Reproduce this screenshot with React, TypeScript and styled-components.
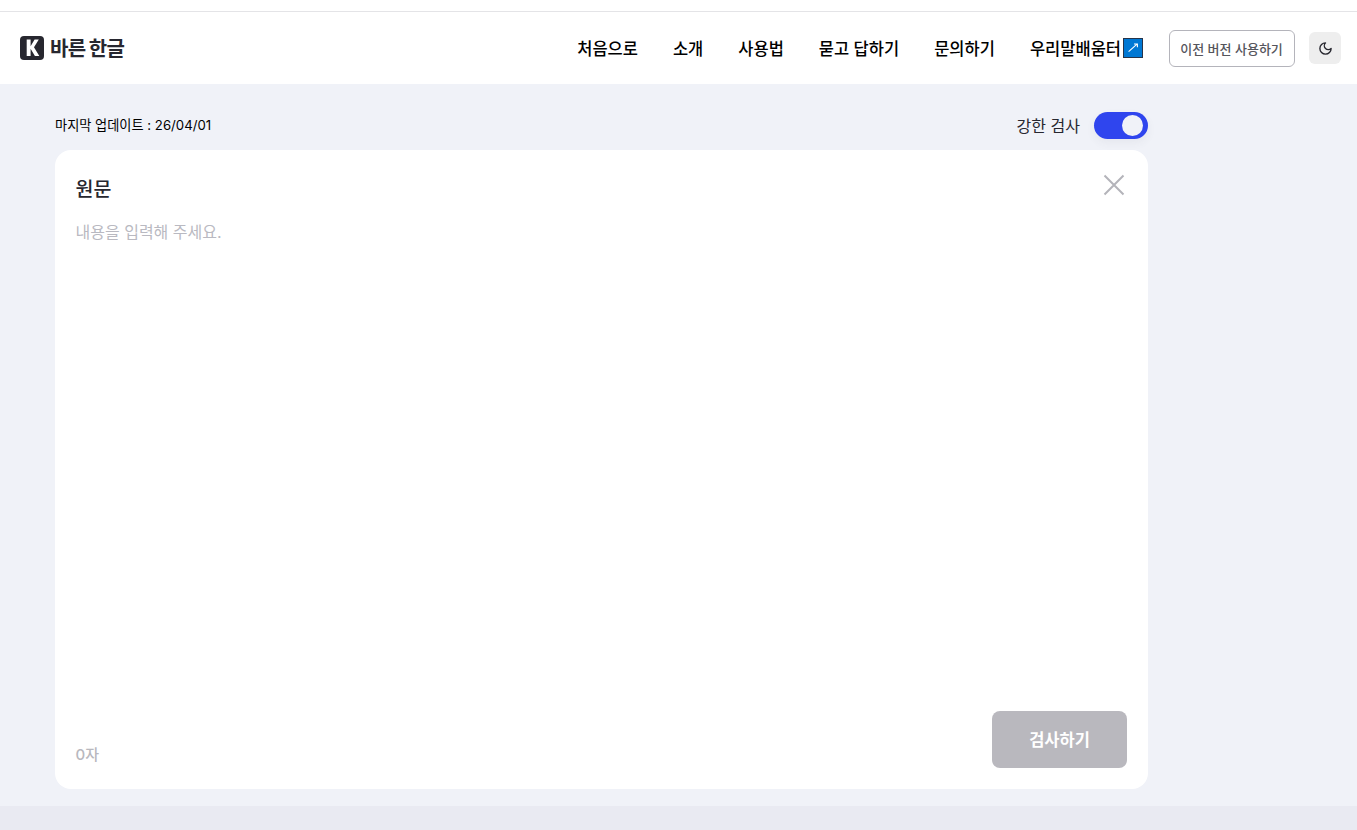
import React from 'react';
import styled, { createGlobalStyle } from 'styled-components';

const GlobalStyle = createGlobalStyle`
  html, body {
    margin: 0;
    padding: 0;
    background: #e9eaf2;
    font-family: "Inter", "Noto Sans CJK KR", sans-serif;
    overflow: hidden;
  }
`;

const Page = styled.div`
  display: flex;
  flex-direction: column;
  height: 830px;
`;

const TopStrip = styled.div`
  height: 11px;
  background: #fff;
  border-bottom: 1px solid #e4e4e7;
`;

const Header = styled.header`
  display: flex;
  align-items: center;
  justify-content: space-between;
  height: 72px;
  padding: 0 16px 0 20px;
  background: #fff;
`;

const Logo = styled.a`
  display: flex;
  align-items: center;
  gap: 6px;
  color: #27272f;
  font-size: 20px;
  font-weight: 700;
  letter-spacing: -0.6px;
  word-spacing: -1px;
  padding-bottom: 1px;
`;

const Right = styled.div`
  display: flex;
  align-items: center;
`;

const Menu = styled.nav`
  display: flex;
  align-items: center;
  gap: 35px;
  margin-right: 26px;
`;

const MenuLink = styled.a`
  display: flex;
  align-items: center;
  color: #000;
  font-size: 16.5px;
  font-weight: 500;
  white-space: nowrap;
  padding-bottom: 1px;
`;

const OldVersion = styled.button`
  width: 126px;
  height: 37px;
  padding: 0 1px 0 0;
  margin-right: 14px;
  background: #fff;
  border: 1px solid #b4b4bb;
  border-radius: 6px;
  color: #55555c;
  font-family: inherit;
  font-size: 13px;
  font-weight: 500;
`;

const ThemeButton = styled.button`
  display: flex;
  align-items: center;
  justify-content: center;
  width: 32px;
  height: 32px;
  padding: 0;
  background: #eeeeee;
  border: none;
  border-radius: 6px;
  color: #27272f;
`;

const Main = styled.main`
  flex: 1;
  padding: 28px 0 0 55px;
  background: #f0f2f8;
`;

const Content = styled.div`
  display: flex;
  flex-direction: column;
  width: 1093px;
`;

const TopRow = styled.div`
  display: flex;
  align-items: center;
  justify-content: space-between;
  height: 27px;
  margin-bottom: 11px;
`;

const Updated = styled.span`
  color: #000;
  font-size: 13.2px;
  padding-bottom: 2px;
`;

const StrictCheck = styled.label`
  display: flex;
  align-items: center;
  gap: 14px;
  color: #27272f;
  font-size: 16px;
`;

const StrictLabel = styled.span`
  padding-bottom: 2px;
`;

const Toggle = styled.span<{ $on: boolean }>`
  display: flex;
  align-items: center;
  justify-content: ${p => (p.$on ? 'flex-end' : 'flex-start')};
  width: 54px;
  height: 27px;
  padding: 0 5px;
  box-sizing: border-box;
  background: #2f45ee;
  border-radius: 14px;
  box-shadow: 0 4px 10px rgba(60, 60, 90, 0.06);
`;

const Knob = styled.span`
  width: 21px;
  height: 21px;
  background: #f0f2f8;
  border-radius: 50%;
`;

const Card = styled.section`
  display: flex;
  flex-direction: column;
  justify-content: space-between;
  height: 639px;
  padding: 25px 21px 21px 20.5px;
  box-sizing: border-box;
  background: #fff;
  border-radius: 16px;
`;

const CardTop = styled.div`
  display: flex;
  align-items: flex-start;
  justify-content: space-between;
`;

const Title = styled.h2`
  margin: 0 0 17px;
  color: #27272f;
  font-size: 19.5px;
  font-weight: 500;
  line-height: 28px;
`;

const Placeholder = styled.p`
  margin: 0;
  color: #b9b9c1;
  font-size: 16px;
  line-height: 24px;
`;

const CloseButton = styled.button`
  display: flex;
  padding: 0;
  margin: -2px 1px 0 0;
  background: none;
  border: none;
  color: #b4b4ba;
`;

const CardBottom = styled.div`
  display: flex;
  align-items: flex-end;
  justify-content: space-between;
`;

const Count = styled.span`
  color: #b8b8be;
  font-size: 15px;
  font-weight: 500;
  line-height: 24px;
  margin-bottom: 1px;
`;

const CheckButton = styled.button`
  width: 135px;
  height: 57px;
  padding: 0 0 2px;
  background: #b9b8be;
  border: none;
  border-radius: 8px;
  color: #fff;
  font-family: inherit;
  font-size: 16.5px;
  font-weight: 700;
`;

const Footer = styled.footer`
  height: 24px;
  background: #e9eaf2;
`;

const ArrowSvg = styled.svg`
  margin-left: 2px;
`;

const LogoMark = () => (
  <svg width="24" height="24" viewBox="0 0 24 24">
    <rect width="24" height="24" rx="4" fill="#27272f" />
    <path d="M6.7 3.6h3.9v6.6l4-6.6h4.2L14 11.3l5.3 8.6h-4.4l-4.3-7.2v7.2H6.7z" fill="#fff" />
  </svg>
);

const ArrowBox = () => (
  <ArrowSvg width="20" height="20" viewBox="0 0 20 20">
    <rect x="0.5" y="0.5" width="19" height="19" fill="#0078d4" stroke="#26344a" />
    <path d="M5.6 13.7 14 6.2M11 6h3.4v3.2" fill="none" stroke="#fff" strokeWidth="1.1" />
  </ArrowSvg>
);

const Moon = () => (
  <svg width="15" height="15" viewBox="0 0 24 24" fill="none" stroke="currentColor" strokeWidth="2.2" strokeLinecap="round" strokeLinejoin="round">
    <path d="M12 3a6 6 0 0 0 9 9 9 9 0 1 1-9-9Z" />
  </svg>
);

const CloseIcon = () => (
  <svg width="24" height="24" viewBox="0 0 24 24" fill="none" stroke="currentColor" strokeWidth="2">
    <path d="M2.5 2.5 21.5 21.5M21.5 2.5 2.5 21.5" />
  </svg>
);

const links = ['처음으로', '소개', '사용법', '묻고 답하기', '문의하기'];

export default function App() {
  return (
    <Page>
      <GlobalStyle />
      <TopStrip />
      <Header>
        <Logo>
          <LogoMark />
          바른 한글
        </Logo>
        <Right>
          <Menu>
            {links.map(l => (
              <MenuLink key={l}>{l}</MenuLink>
            ))}
            <MenuLink>
              우리말배움터
              <ArrowBox />
            </MenuLink>
          </Menu>
          <OldVersion>이전 버전 사용하기</OldVersion>
          <ThemeButton>
            <Moon />
          </ThemeButton>
        </Right>
      </Header>
      <Main>
        <Content>
          <TopRow>
            <Updated>마지막 업데이트 : 26/04/01</Updated>
            <StrictCheck>
              <StrictLabel>강한 검사</StrictLabel>
              <Toggle $on>
                <Knob />
              </Toggle>
            </StrictCheck>
          </TopRow>
          <Card>
            <CardTop>
              <div>
                <Title>원문</Title>
                <Placeholder>내용을 입력해 주세요.</Placeholder>
              </div>
              <CloseButton>
                <CloseIcon />
              </CloseButton>
            </CardTop>
            <CardBottom>
              <Count>0자</Count>
              <CheckButton>검사하기</CheckButton>
            </CardBottom>
          </Card>
        </Content>
      </Main>
      <Footer />
    </Page>
  );
}
